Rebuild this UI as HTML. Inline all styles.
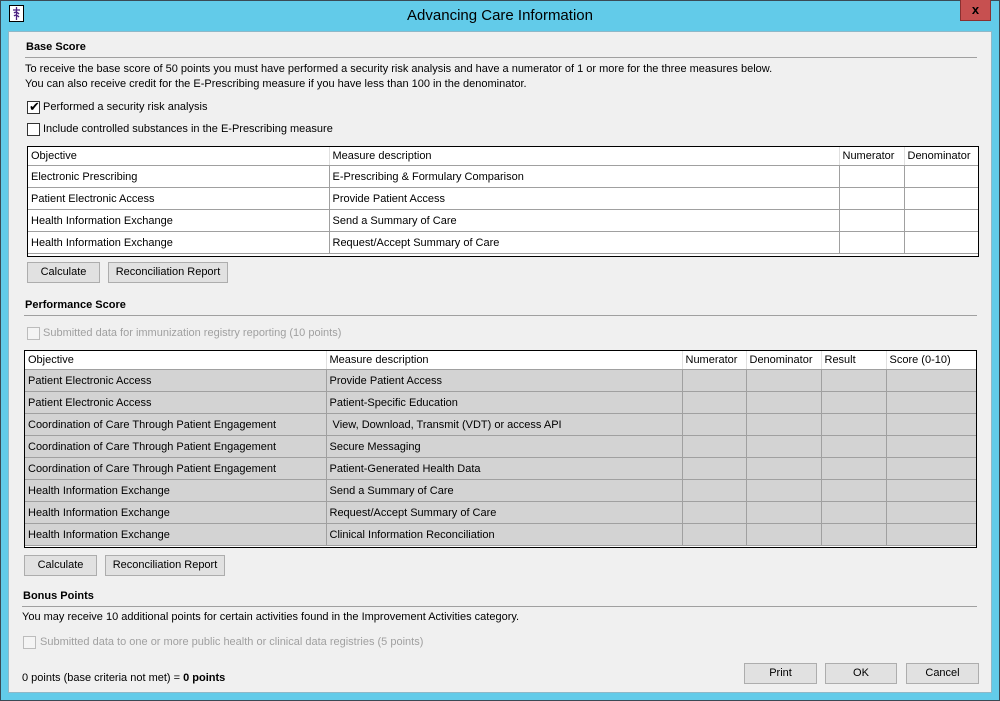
<!DOCTYPE html>
<html><head><meta charset="utf-8"><style>
*{margin:0;padding:0;box-sizing:border-box}
body{width:1000px;height:701px;background:#5fcaea;font-family:"Liberation Sans",Arial,sans-serif;font-size:11px;color:#000;position:relative;overflow:hidden}
.a{position:absolute}
.frame{left:0;top:0;width:1000px;height:701px;border:1px solid #3a4a55;background:#62cbe9}
.client{left:8px;top:31px;width:984px;height:662px;background:#f0f0f0;border:1px solid #8fb8c8}
.title{left:0;top:7px;width:1000px;text-align:center;font-size:15px;color:#000}
.close{left:960px;top:0;width:31px;height:21px;background:#c75050;border:1px solid #8a3030;border-top:none;color:#000;font-weight:bold;font-size:13px;text-align:center;line-height:19px}
.hdr{font-weight:bold;font-size:11px}
.line{height:1px;background:#a0a0a0}
.cb{width:13px;height:13px;border:1px solid #333;background:#fff}
.cb.dis{border-color:#bcbcbc;background:#f4f4f4}
.btn{height:21px;border:1px solid #adadad;background:#e1e1e1;text-align:center;line-height:19px;font-size:11px}
.dis{color:#a0a0a0}
.box{position:absolute;border:1px solid #000;background:#fff;overflow:hidden}
table{border-collapse:collapse;table-layout:fixed;width:100%;background:#fff}
td{border:1px solid #a0a0a0;height:22px;padding:1px 3px 0;white-space:nowrap;overflow:hidden;font-size:11px}
tr td:first-child{border-left:none}
tr td:last-child{border-right:none}
tr.h td{height:18px;background:#fff;border-top:none;border-color:#e0e0e0 #e0e0e0 #a0a0a0 #e0e0e0}
.g td{background:#d3d3d3}
</style></head><body>
<div class="a frame"></div>
<div class="a client"></div>
<svg class="a" style="left:9px;top:5px" width="16" height="18" viewBox="0 0 16 18"><rect x="0.5" y="0.5" width="14" height="16" fill="#fff" stroke="#000"/><path d="M7.5 2v13M4 5h7M5 8c2-2 4 0 5 1M5 11c2-2 4 0 5 1" stroke="#4a2080" stroke-width="1.3" fill="none"/></svg>
<div class="a title">Advancing Care Information</div>
<div class="a close">x</div>

<div class="a hdr" style="left:26px;top:41px">Base Score</div>
<div class="a line" style="left:25px;top:57px;width:952px"></div>
<div class="a" style="left:25px;top:62px;line-height:15px">To receive the base score of 50 points you must have performed a security risk analysis and have a numerator of 1 or more for the three measures below.<br>You can also receive credit for the E-Prescribing measure if you have less than 100 in the denominator.</div>
<div class="a cb" style="left:27px;top:101px"></div>
<div class="a" style="left:29px;top:99px;font-size:13px">✔</div>
<div class="a" style="left:43px;top:101px">Performed a security risk analysis</div>
<div class="a cb" style="left:27px;top:123px"></div>
<div class="a" style="left:43px;top:123px">Include controlled substances in the E-Prescribing measure</div>

<div class="box" style="left:27px;top:146px;width:952px;height:111px">
<table>
<colgroup><col style="width:301px"><col style="width:510px"><col style="width:65px"><col style="width:74px"></colgroup>
<tr class="h"><td>Objective</td><td>Measure description</td><td>Numerator</td><td>Denominator</td></tr>
<tr><td>Electronic Prescribing</td><td>E-Prescribing &amp; Formulary Comparison</td><td></td><td></td></tr>
<tr><td>Patient Electronic Access</td><td>Provide Patient Access</td><td></td><td></td></tr>
<tr><td>Health Information Exchange</td><td>Send a Summary of Care</td><td></td><td></td></tr>
<tr><td>Health Information Exchange</td><td>Request/Accept Summary of Care</td><td></td><td></td></tr>
</table></div>

<div class="a btn" style="left:27px;top:262px;width:73px">Calculate</div>
<div class="a btn" style="left:108px;top:262px;width:120px">Reconciliation Report</div>

<div class="a hdr" style="left:25px;top:299px">Performance Score</div>
<div class="a line" style="left:24px;top:315px;width:953px"></div>
<div class="a cb dis" style="left:27px;top:327px"></div>
<div class="a dis" style="left:43px;top:327px">Submitted data for immunization registry reporting (10 points)</div>

<div class="box" style="left:24px;top:350px;width:953px;height:198px">
<table>
<colgroup><col style="width:301px"><col style="width:356px"><col style="width:64px"><col style="width:75px"><col style="width:65px"><col style="width:90px"></colgroup>
<tr class="h"><td>Objective</td><td>Measure description</td><td>Numerator</td><td>Denominator</td><td>Result</td><td>Score (0-10)</td></tr>
<tr class="g"><td>Patient Electronic Access</td><td>Provide Patient Access</td><td></td><td></td><td></td><td></td></tr>
<tr class="g"><td>Patient Electronic Access</td><td>Patient-Specific Education</td><td></td><td></td><td></td><td></td></tr>
<tr class="g"><td>Coordination of Care Through Patient Engagement</td><td>&nbsp;View, Download, Transmit (VDT) or access API</td><td></td><td></td><td></td><td></td></tr>
<tr class="g"><td>Coordination of Care Through Patient Engagement</td><td>Secure Messaging</td><td></td><td></td><td></td><td></td></tr>
<tr class="g"><td>Coordination of Care Through Patient Engagement</td><td>Patient-Generated Health Data</td><td></td><td></td><td></td><td></td></tr>
<tr class="g"><td>Health Information Exchange</td><td>Send a Summary of Care</td><td></td><td></td><td></td><td></td></tr>
<tr class="g"><td>Health Information Exchange</td><td>Request/Accept Summary of Care</td><td></td><td></td><td></td><td></td></tr>
<tr class="g"><td>Health Information Exchange</td><td>Clinical Information Reconciliation</td><td></td><td></td><td></td><td></td></tr>
</table></div>

<div class="a btn" style="left:24px;top:555px;width:73px">Calculate</div>
<div class="a btn" style="left:105px;top:555px;width:120px">Reconciliation Report</div>

<div class="a hdr" style="left:23px;top:590px">Bonus Points</div>
<div class="a line" style="left:22px;top:606px;width:955px"></div>
<div class="a" style="left:22px;top:611px">You may receive 10 additional points for certain activities found in the Improvement Activities category.</div>
<div class="a cb dis" style="left:23px;top:636px"></div>
<div class="a dis" style="left:40px;top:636px">Submitted data to one or more public health or clinical data registries (5 points)</div>
<div class="a" style="left:22px;top:672px">0 points (base criteria not met) = <b>0 points</b></div>

<div class="a btn" style="left:744px;top:663px;width:73px">Print</div>
<div class="a btn" style="left:825px;top:663px;width:72px">OK</div>
<div class="a btn" style="left:906px;top:663px;width:73px">Cancel</div>
</body></html>
